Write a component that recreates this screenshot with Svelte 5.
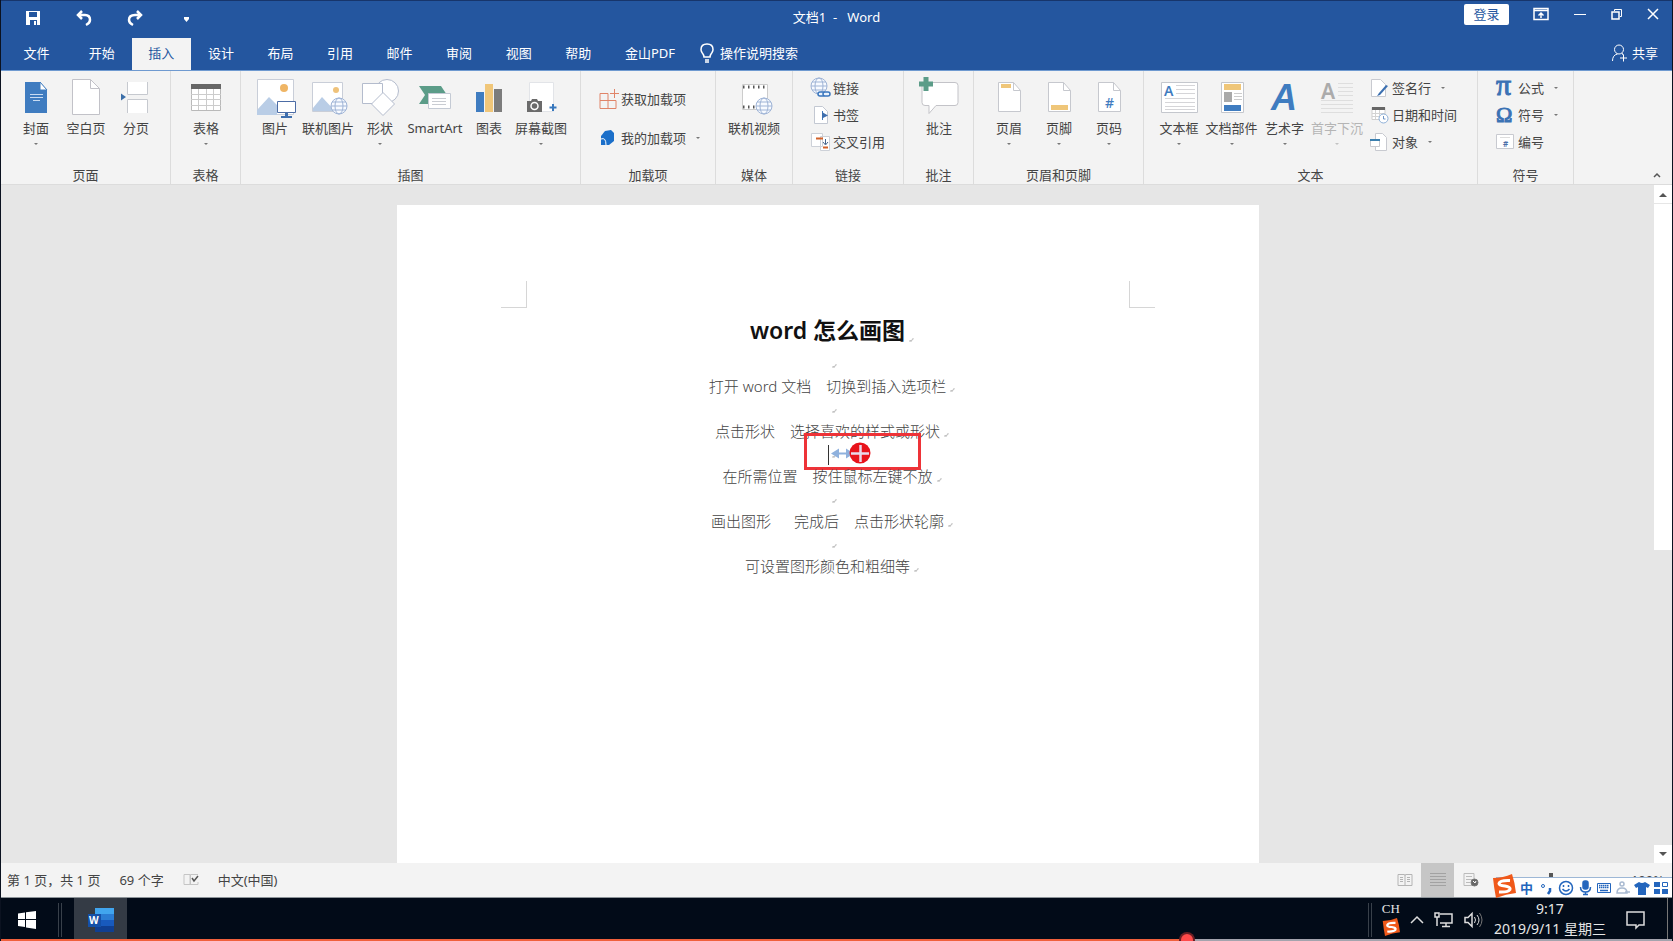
<script>
  const tabs = ['开始', '插入', '设计', '布局', '引用', '邮件', '审阅', '视图', '帮助'];
  let active = $state('插入');

  // big = icon over label, list = stacked small rows
  const groups = [
    { name: '页面', size: 'g-pages', big: [
      { label: '封面', icon: 'cover', menu: true, w: 50 },
      { label: '空白页', icon: 'blank', w: 50 },
      { label: '分页', icon: 'break', w: 50 }
    ] },
    { name: '表格', size: 'g-small', big: [{ label: '表格', icon: 'table', menu: true, w: 50 }] },
    { name: '插图', size: 'g-pics', big: [
      { label: '图片', icon: 'picture', w: 48 },
      { label: '联机图片', icon: 'online', w: 58 },
      { label: '形状', icon: 'shapes', menu: true, w: 46 },
      { label: 'SmartArt', icon: 'smart', w: 64 },
      { label: '图表', icon: 'chart', w: 44 },
      { label: '屏幕截图', icon: 'shot', menu: true, w: 60 }
    ] },
    { name: '加载项', size: 'g-addins', list: [
      { label: '获取加载项', icon: 'store' },
      { label: '我的加载项', icon: 'addin', menu: true }
    ] },
    { name: '媒体', size: 'g-media', big: [{ label: '联机视频', icon: 'video', w: 60 }] },
    { name: '链接', size: 'g-links', list: [
      { label: '链接', icon: 'link' },
      { label: '书签', icon: 'bookmark' },
      { label: '交叉引用', icon: 'cross' }
    ] },
    { name: '批注', size: 'g-small', big: [{ label: '批注', icon: 'comment', w: 50 }] },
    { name: '页眉和页脚', size: 'g-pages', big: [
      { label: '页眉', icon: 'header', menu: true, w: 50 },
      { label: '页脚', icon: 'footer', menu: true, w: 50 },
      { label: '页码', icon: 'number', menu: true, w: 50 }
    ] },
    { name: '文本', size: 'g-text', big: [
      { label: '文本框', icon: 'textbox', menu: true, w: 50 },
      { label: '文档部件', icon: 'parts', menu: true, w: 55 },
      { label: '艺术字', icon: 'wordart', menu: true, w: 51 },
      { label: '首字下沉', icon: 'dropcap', menu: true, w: 54, off: true }
    ], list: [
      { label: '签名行', icon: 'sign', menu: true },
      { label: '日期和时间', icon: 'date' },
      { label: '对象', icon: 'object', menu: true }
    ] },
    { name: '符号', size: 'g-symbols', list: [
      { label: '公式', icon: 'pi', menu: true },
      { label: '符号', icon: 'omega', menu: true },
      { label: '编号', icon: 'hash' }
    ] }
  ];

  const lines = [
    '打开 word 文档\u3000切换到插入选项栏',
    '点击形状\u3000选择喜欢的样式或形状',
    '在所需位置\u3000按住鼠标左键不放',
    '画出图形\u3000  完成后\u3000点击形状轮廓',
    '可设置图形颜色和粗细等'
  ];

  const ime = ['punct', 'smile', 'mic', 'keyboard', 'user', 'shirt', 'grid'];
</script>

{#snippet globe(cx, cy, r)}
  <g fill="#f7faff" stroke="#9fb4d6">
    <circle {cx} {cy} {r} />
    <ellipse {cx} {cy} rx={r / 2} ry={r} fill="none" />
    <path d="M{cx - r} {cy}h{r * 2}M{cx - r + 1} {cy - r / 2}h{r * 2 - 2}M{cx - r + 1} {cy + r / 2}h{r * 2 - 2}" fill="none" />
  </g>
{/snippet}

{#snippet bigIcon(name)}
  <svg class="big-icon" viewBox="0 0 40 40" aria-hidden="true">
    {#if name === 'cover'}
      <path d="M9 3h15l7 8v23H9z" fill="#3f7cc0" />
      <path d="M24 3v8h7z" fill="#fff" stroke="#3f7cc0" />
      <path d="M14 15.500h13M14 18.500h13M17 21.500h7" stroke="#c9dcf2" />
    {:else if name === 'blank'}
      <path d="M6.500.5h18l9 9v26h-27z" fill="#fff" stroke="#c2c2c8" />
      <path d="M24.500.5v9h9" fill="none" stroke="#c2c2c8" />
    {:else if name === 'break'}
      <path d="M11 3h21v13H11zM11 20h21v14H11z" fill="#fff" />
      <path d="M11.500 3v12.500h20V3M11.500 34V20.500h20V34" fill="none" stroke="#c6c9cf" />
      <path d="M5 14.500l5 3.500-5 3.500z" fill="#3b6ea8" />
    {:else if name === 'table'}
      <path d="M5.500 5.500h29v26h-29z" fill="#fff" stroke="#b9b9b9" />
      <path d="M5 5h30v5H5z" fill="#666" />
      <path d="M5 15.500h30M5 20.500h30M5 26.500h30M12.500 10v21M20.500 10v21M27.500 10v21" stroke="#ccc" />
    {:else if name === 'picture'}
      <path d="M2.500.5h36v35h-36z" fill="#fff" stroke="#c9ced8" />
      <path d="M2 36v-5l12-13 8 8v10z" fill="#b9cde6" />
      <circle cx="29" cy="9" r="4" fill="#efb565" />
      <path d="M22.500 22.500h18v11h-18z" fill="#fff" stroke="#4c6ca5" />
      <path d="M30 34h3v3h4v2H26v-2h4z" fill="#3f6fae" />
    {:else if name === 'online'}
      <path d="M4.500 3.500h30v29h-30z" fill="#fff" stroke="#c9ced8" />
      <path d="M5 32v-3l9-11 13 14z" fill="#b9cde6" />
      <circle cx="28" cy="11" r="3" fill="#efc27a" />
      {@render globe(31, 27, 8)}
    {:else if name === 'shapes'}
      <g fill="#fff" stroke="#b4bccd">
        <circle cx="27" cy="12" r="11.500" />
        <path d="M2.500 4.500h20v20h-20z" />
        <path d="M23 13.500L34.500 25 23 36.500 11.500 25z" />
      </g>
    {:else if name === 'smart'}
      <path d="M4 7h22l6 9-6 9H4l6-9z" fill="#5b9c88" />
      <path d="M13.500 14.500h22v15h-22z" fill="#fff" stroke="#c4cad4" />
      <path d="M17 19.500h14M17 22.500h14M17 25.500h14" stroke="#c9ccd2" />
    {:else if name === 'chart'}
      <path d="M7 13h8v20H7z" fill="#3f7cc0" />
      <path d="M16 5h8v28h-8z" fill="#f0c679" />
      <path d="M25 10h8v23h-8z" fill="#7c7c7c" />
    {:else if name === 'shot'}
      <path d="M8.500 3.500h24v29h-24z" fill="#fff" stroke="#e2e4e8" />
      <path d="M6 22h4l1-2h5l1 2h4v11H6z" fill="#6b6b6b" />
      <circle cx="13.500" cy="27" r="3.500" fill="none" stroke="#fff" stroke-width="1.500" />
      <path d="M28.500 28.500h7M32 25v7" stroke="#3878bd" stroke-width="2" />
    {:else if name === 'video'}
      <path d="M8.500 5.500h25v25h-25z" fill="#fff" stroke="#ccc" />
      <path d="M9 8h25M9 28h25" stroke="#555" stroke-width="3" stroke-dasharray="1.500 3.500" />
      {@render globe(30, 27, 8)}
    {:else if name === 'comment'}
      <path d="M6 3.500h30q3 0 3 3v17q0 3-3 3H17l-7 8v-8H6q-3 0-3-3v-17q0-3 3-3z" fill="#fff" stroke="#c3c3c8" />
      <path d="M0 5h14M7-2v14" stroke="#5b9c88" stroke-width="5" />
    {:else if name === 'header' || name === 'footer' || name === 'number'}
      <path d="M9.500 3.500h15l7 8v21h-22z" fill="#fff" stroke="#c6c8ce" />
      <path d="M24.500 3.500v8h7" fill="none" stroke="#c6c8ce" />
      {#if name === 'header'}<path d="M12 5h10v4H12z" fill="#efc679" />{/if}
      {#if name === 'footer'}<path d="M12 26h17v5H12z" fill="#efc679" />{/if}
      {#if name === 'number'}<text x="16" y="29" font-size="14" font-weight="500" fill="#3f7cc0">#</text>{/if}
    {:else if name === 'textbox'}
      <path d="M2.500 3.500h36v30h-36z" fill="#fff" stroke="#c4c7cd" />
      <path d="M17 6.500h19M17 10.500h19M17 14.500h19M6 19.500h30M6 23.500h30M6 27.500h30M6 30.500h30" stroke="#d5d5d8" />
      <text x="5" y="17" font-size="14" font-weight="600" fill="#3f7cc0">A</text>
    {:else if name === 'parts'}
      <path d="M9.500 3.500h22v30h-22z" fill="#fff" stroke="#c4c7cd" />
      <path d="M12 5h17v6H12z" fill="#efc679" />
      <path d="M12 13h8v10h-8z" fill="#a9a9a9" />
      <path d="M22 14.500h8M22 17.500h8M22 20.500h8" stroke="#ccc" />
      <path d="M12 26h17v6H12z" fill="#3f7cc0" />
    {:else if name === 'wordart'}
      <text class="sans" x="6" y="31" font-size="36" font-weight="700" font-style="italic" fill="#3f7cc0">A</text>
    {:else if name === 'dropcap'}
      <path d="M21 4.500h15M21 8.500h15M21 12.500h15M21 16.500h15M4 21.500h32M4 25.500h32M4 29.500h32M4 33.500h32" stroke="#dedede" />
      <text x="4" y="20" font-size="21" font-weight="600" fill="#ababab">A</text>
    {/if}
  </svg>
{/snippet}

{#snippet smallIcon(name)}
  <svg class="small-icon" viewBox="0 0 18 18" aria-hidden="true">
    {#if name === 'store'}
      <path d="M1 3.500h8v15H1zM1 10.500h16v8H9" fill="none" stroke="#e08468" />
      <path d="M15.500-1v9M11 3.500h9" stroke="#e08468" />
    {:else if name === 'addin'}
      <path d="M6 2l6-1 3 3v8l-5 4H2V7z" fill="#1b6fc9" />
      <path d="M2 10q5-2 5 6" fill="none" stroke="#fff" />
    {:else if name === 'link'}
      <g transform="translate(-1 -2)">{@render globe(9, 9, 8)}</g>
      <g fill="#eaf2fc" stroke="#3a76bd" stroke-width="1.500">
        <rect x="7" y="13" width="7" height="4" rx="2" />
        <rect x="12" y="13" width="7" height="4" rx="2" />
      </g>
    {:else if name === 'bookmark'}
      <path d="M3.500.5h8l5 5v12h-13z" fill="#fff" stroke="#c3c8d2" />
      <path d="M11.500 5v9" stroke="#3f7cc0" />
      <path d="M11 6l6 3.500-6 3z" fill="#3f6fae" />
    {:else if name === 'cross'}
      <path d="M.5.5h11v13H.5zM9.500 3.500h9v14h-9z" fill="#fff" stroke="#cdd1d8" />
      <path d="M5 5.500h7M12 14.500h5" stroke="#d2622a" stroke-width="2" />
      <path d="M14.500 6v5M12 9l2.500 3L17 9" fill="none" stroke="#44648c" />
    {:else if name === 'sign'}
      <path d="M1.500.5h9l5 5v12h-14z" fill="#fff" stroke="#c8cad0" />
      <path d="M16 6l-7 8-2 3 3-1 8-9z" fill="#3b6fb0" />
    {:else if name === 'date'}
      <path d="M2 1.500h13v12H2z" fill="#fff" stroke="#cfcfcf" />
      <path d="M2 1h13v3H2z" fill="#666" />
      <path d="M2 7.500h13M2 10.500h13M5.500 4v9M9.500 4v9" stroke="#d3d3d3" />
      <circle cx="13.500" cy="12.500" r="4.500" fill="#fff" stroke="#8eb0d8" />
      <path d="M13.500 10v3h2" fill="none" stroke="#6b93c4" />
    {:else if name === 'object'}
      <path d="M5.500.5h7l4 4v13h-11z" fill="#fff" stroke="#c8cad0" />
      <path d="M.5 6.500h9v7h-9z" fill="#fff" stroke="#c8cad0" />
      <path d="M0 6h10v2H0z" fill="#3b7fae" />
    {:else if name === 'pi'}
      <text class="serif" x="0" y="16" font-size="30" fill="#3b72b4" stroke="#3b72b4">π</text>
    {:else if name === 'omega'}
      <text class="serif" x="0" y="16" font-size="22" fill="#3b72b4" stroke="#3b72b4">Ω</text>
    {:else if name === 'hash'}
      <path d="M.5 1.500h17v14H.5z" fill="#fff" stroke="#c8cad0" />
      <path d="M4 4.500h10" stroke="#ddd" />
      <text x="7" y="14" font-size="8" font-weight="600" fill="#4a6ea8">#</text>
    {/if}
  </svg>
{/snippet}

{#snippet sogou()}
  <svg class="sogou" viewBox="0 0 24 24" aria-hidden="true">
    <path d="M1 4Q11 4 20 0q3 9 4 19Q14 20 4 24 2 14 1 4z" fill="#f0591a" />
    <path d="M18 6.500Q8 6 7 9.500q0 2 6 2.500 6 1 5 3.500-2 3-11 2.500" fill="none" stroke="#fff" stroke-width="3" />
  </svg>
{/snippet}

{#snippet mark()}
  <svg class="mark" viewBox="0 0 4 4" aria-hidden="true"><path d="M4 0v1.500L1 3M0 3h3" fill="none" stroke="#bbb" /></svg>
{/snippet}

<div class="window">
  <header class="titlebar">
    <div class="quick">
      <button aria-label="保存">
        <svg width="16" height="16" viewBox="0 0 16 16"><path d="M1 1h14v14H1z" fill="#fff" /><path d="M4 2h8v5H4zM5 10h7v5H5z" fill="#24569f" /><path d="M9 11h2v4H9z" fill="#fff" /></svg>
      </button>
      <button aria-label="撤消">
        <svg width="16" height="16" viewBox="0 0 16 16" fill="none" stroke="#fff" stroke-width="2.500"><path d="M6 1L2 5l4 4M2 5h7q5 0 5 5 0 3-4 5" /></svg>
      </button>
      <button aria-label="恢复">
        <svg width="16" height="16" viewBox="0 0 16 16" fill="none" stroke="#fff" stroke-width="2.500"><path d="M10 1l4 4-4 4M14 5H8Q2 5 2 10q0 3 4 5" /></svg>
      </button>
      <button aria-label="自定义快速访问工具栏">
        <svg width="16" height="16" viewBox="0 0 16 16"><path d="M6 7h5v2l-2.500 3L6 9z" fill="#fff" /></svg>
      </button>
    </div>
    <h1>文档1&nbsp; -&nbsp;&nbsp; Word</h1>
    <div class="controls">
      <button class="login">登录</button>
      <button aria-label="功能区显示选项">
        <svg width="16" height="14" viewBox="0 0 16 14" fill="none" stroke="#fff"><path d="M1 1.500h14v11H1zM1 3.500h14" stroke-width="1.500" /><path d="M8 11V6M5.500 8.500L8 6l2.500 2.500" stroke-width="1.500" /></svg>
      </button>
      <button aria-label="最小化">
        <svg width="14" height="14" viewBox="0 0 14 14"><path d="M1 7.500h12" stroke="#fff" /></svg>
      </button>
      <button aria-label="还原">
        <svg width="12" height="12" viewBox="0 0 12 12" fill="none" stroke="#fff"><path d="M1 4h7v7H1z" stroke-width="1.500" /><path d="M3.500 3V1.500h7v7H9" /></svg>
      </button>
      <button aria-label="关闭">
        <svg width="12" height="12" viewBox="0 0 12 12"><path d="M1 1l10 10M11 1L1 11" stroke="#fff" stroke-width="1.500" /></svg>
      </button>
    </div>
  </header>

  <nav class="tabs">
    <button class="file">文件</button>
    <div class="tab-row">
      {#each tabs as tab}
        <button class:active={tab === active} onclick={() => (active = tab)}>{tab}</button>
      {/each}
    </div>
    <button class="pdf">金山PDF</button>
    <button class="tell">
      <svg width="14" height="20" viewBox="0 0 14 20" fill="none" stroke="#fff" stroke-width="1.500"><path d="M4 14q0-2-2-4.500Q1 8 1 6.500 1 1 7 1t6 5.500q0 1.500-1 3-2 2.500-2 4.500zM5 17h4M5 19h4" /></svg>
      操作说明搜索
    </button>
    <button class="share">
      <svg width="16" height="18" viewBox="0 0 16 18" fill="none" stroke="#fff"><circle cx="7" cy="5.500" r="4.500" /><path d="M.5 17q0-6 5-7M10 9l1 2M8 14h7M11.500 10.500v7" /></svg>
      共享
    </button>
  </nav>

  <section class="ribbon">
    {#each groups as group}
      <div class="group {group.size}">
        <div class="tools">
          {#if group.big}
            {#each group.big as tool}
              <button class="big" class:off={tool.off} disabled={tool.off} style="width: {tool.w}px">
                {@render bigIcon(tool.icon)}
                <span>{tool.label}</span>
                {#if tool.menu}<i class="arrow"></i>{/if}
              </button>
            {/each}
          {/if}
          {#if group.list}
            <div class="list">
              {#each group.list as tool}
                <button class="row">
                  {@render smallIcon(tool.icon)}
                  <span>{tool.label}</span>
                  {#if tool.menu}<i class="arrow"></i>{/if}
                </button>
              {/each}
            </div>
          {/if}
        </div>
        <div class="group-name">{group.name}</div>
      </div>
    {/each}
    <button class="collapse" aria-label="折叠功能区">
      <svg width="8" height="6" viewBox="0 0 8 6"><path d="M1 5l3-3 3 3" fill="none" stroke="#555" stroke-width="1.500" /></svg>
    </button>
  </section>

  <main class="workspace">
    <div class="canvas">
      <article class="page">
        <div class="corners"><i class="corner"></i><i class="corner right"></i></div>
        <h2><span>word 怎么画图{@render mark()}</span></h2>
        {#each lines as line, i}
          <p class="empty">
            <span>{@render mark()}
              {#if i === 2}
                <svg class="callout" width="117" height="37" viewBox="0 0 117 37" aria-hidden="true">
                  <path d="M24.500 12v20" stroke="#333" />
                  <path d="M27 20.500l8-5v4h7v-4l8 5-8 5v-4h-7v4z" fill="#8fb1dd" />
                  <circle cx="56" cy="20" r="10.500" fill="#e8131b" />
                  <path d="M47 20.500h18M56.500 12v17" stroke="#e9d9ea" stroke-width="2.500" />
                  <path d="M1.500 1.500h114v34H1.500z" fill="none" stroke="#ee3338" stroke-width="3" />
                </svg>
              {/if}
            </span>
          </p>
          <p><span>{line}{@render mark()}</span></p>
        {/each}
      </article>
    </div>
    <div class="scroll">
      <button aria-label="向上滚动"><svg width="8" height="5" viewBox="0 0 8 5"><path d="M0 5l4-4 4 4z" fill="#555" /></svg></button>
      <div class="track"><div class="thumb"></div></div>
      <button aria-label="向下滚动"><svg width="8" height="5" viewBox="0 0 8 5"><path d="M0 0l4 4 4-4z" fill="#555" /></svg></button>
    </div>
  </main>

  <footer class="status">
    <span>第 1 页，共 1 页</span>
    <span>69 个字</span>
    <svg width="16" height="14" viewBox="0 0 16 14" fill="none" stroke="#c5c5c5" aria-hidden="true"><path d="M1 1.500h6v10H1zM7.500 12V1.500H15M7 11.500h8V9" /><path d="M9 5l2 3 4-5" stroke="#555" stroke-width="1.500" /></svg>
    <span>中文(中国)</span>
    <div class="views">
      <button aria-label="阅读视图"><svg width="16" height="14" viewBox="0 0 16 14" fill="none" stroke="#b4b4b4"><path d="M1 1.500h6.500l.5 1 .5-1H15v11H1zM8 2v11M3 4.500h3M3 6.500h3M3 8.500h3M10 4.500h3M10 6.500h3M10 8.500h3" /></svg></button>
      <button class="on" aria-label="页面视图"><svg width="16" height="14" viewBox="0 0 16 14" stroke="#a2a2a2"><path d="M0 .5h16M0 3.500h16M0 6.500h16M0 9.500h16M0 12.500h16" /></svg></button>
      <button aria-label="Web 版式视图"><svg width="16" height="14" viewBox="0 0 16 14" fill="none" stroke="#bbb"><path d="M1 .5h10v12H1zM3 3.500h6M3 6.500h6M3 9.500h4" /><circle cx="11.500" cy="9.500" r="3.500" fill="#666" stroke="#777" /><path d="M10 8l2 2 1-2" stroke="#fff" /></svg></button>
    </div>
    <div class="zoom">
      <i></i><span>+</span><span>100%</span>
    </div>
    <div class="ime">
      {@render sogou()}
      <b>中</b>
      {#each ime as item}
        <svg width="16" height="16" viewBox="0 0 16 16" fill="none" stroke="#2466bd" stroke-width="1.500" aria-hidden="true">
          {#if item === 'punct'}
            <circle cx="4" cy="6" r="1.500" stroke-width="1" /><path d="M11 8v3l-2 3" stroke-width="2.500" />
          {:else if item === 'smile'}
            <circle cx="8" cy="8" r="6.500" /><path d="M4.500 9q3.500 4 7 0M5.500 5v2M10.500 5v2" />
          {:else if item === 'mic'}
            <rect x="6" y="1" width="5" height="8" rx="2" fill="#2466bd" /><path d="M3.500 7q0 5 5 5t5-5M8.500 12v3M6 14.500h5" />
          {:else if item === 'keyboard'}
            <path d="M1.500 3.500h13v9h-13z" stroke-width="1" /><path d="M3 5.500h10M3 7.500h10" stroke-dasharray="1.500 .5" /><path d="M4 10.500h8" />
          {:else if item === 'user'}
            <g stroke="#a9bad1"><circle cx="7" cy="4" r="2" /><path d="M2 13q0-5 5-5t5 5zM10 12h5" /></g>
          {:else if item === 'shirt'}
            <path d="M5 2q3 2 6 0l5 3-2 3-2-1v8H4V7L2 8 0 5z" fill="#2466bd" stroke="none" />
          {:else}
            <path d="M1 2h6v5H1zM1 9h6v5H1zM9 9h6v5H9z" fill="#2466bd" stroke="none" /><path d="M9.500 2.500h5v4h-5z" stroke-width="1" />
          {/if}
        </svg>
      {/each}
    </div>
  </footer>

  <div class="taskbar">
    <button class="start" aria-label="开始">
      <svg width="20" height="20" viewBox="0 0 20 20"><path d="M1 3.500l7-1V9H1zM9 2.300L19 1v8H9zM1 10h7v7l-7-1zM9 10h10v9L9 17.500z" fill="#fff" /></svg>
    </button>
    <i class="grip"></i>
    <button class="word" aria-label="Word">
      <svg width="26" height="24" viewBox="0 0 26 24">
        <path d="M7 0h19v6H7z" fill="#41a5ee" /><path d="M7 6h19v6H7z" fill="#2b7cd3" /><path d="M7 12h19v6H7z" fill="#185abd" /><path d="M7 18h19v6H7z" fill="#103f91" />
        <path d="M0 6h13v13H0z" fill="#1450a8" />
        <text x="1" y="16" font-size="10" font-weight="700" fill="#fff">W</text>
      </svg>
    </button>
    <div class="tray">
      <i class="grip"></i>
      <div class="lang"><span>CH</span>{@render sogou()}</div>
      <svg width="14" height="9" viewBox="0 0 14 9" fill="none" stroke="#ddd" stroke-width="1.500"><path d="M1 8l6-6 6 6" /></svg>
      <svg width="20" height="16" viewBox="0 0 20 16" fill="none" stroke="#ddd" stroke-width="1.500"><path d="M6 2h12v9H6M12 11v3M8 14.500h8M1 1h4v4H1zM3 5v9" /></svg>
      <svg width="20" height="16" viewBox="0 0 20 16" fill="none" stroke="#ddd"><path d="M1 5.500h3l4-4v13l-4-4H1z" stroke-width="1.500" /><path d="M10.500 5q2 3 0 6M13 3q4 5 0 10" /><path d="M15.500 1q5 7 0 14" stroke="#777" /></svg>
      <div class="clock"><span>9:17</span><span>2019/9/11 星期三</span></div>
      <svg width="20" height="20" viewBox="0 0 20 20" fill="none" stroke="#ddd" stroke-width="1.500"><path d="M1 2h17v13h-5l-3 3v-3H1z" /></svg>
      <i class="desktop"></i>
    </div>
    <div class="progress"><div class="played"></div></div>
  </div>
</div>

<style>
  :global(body) {
    margin: 0;
  }

  .window {
    min-height: 100vh;
    box-sizing: border-box;
    display: flex;
    flex-direction: column;
    overflow: hidden;
    border: solid #0b1220;
    border-width: 0 1px;
    background: #e6e6e6;
    color: #444;
    font: 13px/18px "Noto Sans", "Noto Sans CJK SC", sans-serif;
  }

  button {
    margin: 0;
    padding: 0;
    border: 0;
    background: none;
    color: inherit;
    font: inherit;
    white-space: nowrap;
  }

  svg {
    display: block;
    flex: none;
    overflow: visible;
  }

  .serif {
    font-family: "Liberation Serif", serif;
  }

  .sans {
    font-family: "Liberation Sans", sans-serif;
  }

  /* title bar */
  .titlebar {
    display: grid;
    grid-template-columns: 1fr auto 1fr;
    height: 38px;
    box-sizing: border-box;
    border-top: 1px solid #17356b;
    background: #24569f;
    color: #fff;
  }

  .quick {
    display: flex;
    align-items: center;
    gap: 35px;
    padding: 0 0 4px 24px;
  }

  h1 {
    margin: 0;
    font-size: 13px;
    font-weight: 400;
    line-height: 32px;
  }

  .controls {
    display: flex;
    justify-content: flex-end;
    align-items: center;
    gap: 24px;
    height: 26px;
    padding-right: 13px;
  }

  .login {
    width: 45px;
    height: 21px;
    border-radius: 2px;
    background: #fff;
    color: #24569f;
  }

  .tabs {
    display: flex;
    height: 32px;
    background: #24569f;
    color: #fff;
  }

  .tabs button {
    padding-bottom: 2px;
  }

  .file {
    width: 71px;
  }

  .tab-row {
    display: grid;
    grid-template-columns: repeat(9, 1fr);
    width: 536px;
  }

  .tab-row .active {
    background: #f3f3f3;
    color: #24569f;
  }

  .pdf {
    margin: 0 17px;
  }

  .tell,
  .share {
    display: flex;
    align-items: center;
    gap: 6px;
    margin-left: 8px;
  }

  .share {
    gap: 4px;
    margin: 0 14px 0 auto;
  }

  /* ribbon */
  .ribbon {
    display: flex;
    height: 115px;
    box-sizing: border-box;
    border-top: 1px solid #6f9ad0;
    border-bottom: 1px solid #dcdcdc;
    background: #f3f3f3;
  }

  .group {
    display: flex;
    flex-direction: column;
    flex: none;
    box-sizing: border-box;
    border-right: 1px solid #dcdcdc;
  }

  .g-pages { width: 170px; }
  .g-small { width: 70px; }
  .g-pics { width: 340px; }
  .g-addins { width: 135px; }
  .g-media { width: 77px; }
  .g-links { width: 111px; }
  .g-text { width: 334px; }
  .g-symbols { width: 96px; }

  .tools {
    display: flex;
    flex: 1;
    padding: 0 10px;
  }

  .g-media .tools {
    padding: 0 8px;
  }

  .big {
    display: flex;
    flex-direction: column;
    flex: none;
    align-items: center;
    padding-top: 8px;
  }

  .big .arrow {
    margin-top: 6px;
  }

  .off span {
    color: #b5b5b5;
  }

  .off .arrow {
    opacity: 0.4;
  }

  .big-icon {
    width: 40px;
    height: 40px;
  }

  .small-icon {
    width: 18px;
    height: 18px;
  }

  .list {
    display: flex;
    flex-direction: column;
    padding: 3px 0 0 8px;
  }

  .g-addins .list {
    padding-top: 8px;
  }

  .g-text .list {
    padding-left: 6px;
  }

  .row {
    display: flex;
    align-items: center;
    gap: 4px;
    height: 27px;
  }

  .g-addins .row {
    height: 39px;
  }

  .row .arrow {
    margin-left: 6px;
  }

  .arrow {
    border: 2px solid transparent;
    border-top-color: #777;
    border-bottom: 0;
  }

  .group-name {
    height: 18px;
    text-align: center;
  }

  .collapse {
    align-self: flex-end;
    margin-left: auto;
    padding: 6px 11px;
  }

  /* document */
  .workspace {
    display: flex;
    flex: 1;
  }

  .canvas {
    display: flex;
    flex: 1;
    justify-content: center;
    padding-top: 20px;
  }

  .page {
    width: 862px;
    background: #fff;
    text-align: center;
  }

  .corners {
    display: flex;
    justify-content: space-between;
    padding: 76px 104px 0;
  }

  .corner {
    width: 25px;
    height: 26px;
    border: solid #d6d6d6;
    border-width: 0 1px 1px 0;
  }

  .corner.right {
    border-width: 0 0 1px 1px;
  }

  h2 {
    margin: 0;
    color: #111;
    font-size: 23px;
    font-weight: 600;
    line-height: 45px;
  }

  p {
    height: 23px;
    margin: 0;
    color: #444;
    font-size: 15px;
    font-weight: 300;
    line-height: 23px;
    white-space: pre-wrap;
  }

  p.empty {
    height: 22px;
    line-height: 22px;
    white-space: normal;
  }

  h2 span,
  p span {
    position: relative;
  }

  .mark {
    position: absolute;
    right: -8px;
    bottom: 4px;
    width: 4px;
    height: 4px;
  }

  .empty .mark {
    bottom: -15px;
  }

  .callout {
    position: absolute;
    left: -24px;
    top: -10px;
  }

  .scroll {
    display: flex;
    flex-direction: column;
    width: 18px;
  }

  .scroll button {
    display: flex;
    align-items: center;
    justify-content: center;
    height: 18px;
    background: #fff;
  }

  .track {
    flex: 1;
    padding: 1px 0;
  }

  .thumb {
    height: 54%;
    background: #fff;
  }

  /* status bar */
  .status {
    position: relative;
    display: flex;
    align-items: center;
    gap: 19px;
    height: 35px;
    box-sizing: border-box;
    padding-left: 6px;
    border-bottom: 1px solid #8d9499;
    background: #f3f3f3;
  }

  .views {
    display: flex;
    align-self: stretch;
    margin-left: auto;
  }

  .views button {
    display: flex;
    align-items: center;
    justify-content: center;
    width: 33px;
  }

  .views .on {
    background: #c6c6c6;
  }

  .zoom {
    display: flex;
    gap: 12px;
    width: 158px;
    justify-content: flex-end;
    padding-right: 8px;
  }

  .zoom i {
    width: 4px;
    height: 12px;
    margin: 2px 46px 0 0;
    background: #555;
  }

  .ime {
    position: absolute;
    right: 0;
    bottom: 0;
    display: flex;
    align-items: center;
    gap: 3px;
    height: 19px;
    padding-right: 3px;
    border-top: 1px solid #9db7d6;
    background: #fff;
    color: #2466bd;
  }

  .ime b {
    width: 16px;
    font-weight: 700;
  }

  .sogou {
    width: 24px;
    height: 24px;
  }

  .ime .sogou {
    margin: -4px 1px 0 -4px;
  }

  /* taskbar */
  .taskbar {
    position: relative;
    display: flex;
    height: 43px;
    background: #020b18;
    color: #e6e6e6;
  }

  .start {
    padding: 0 21px 0 16px;
  }

  .grip {
    width: 2px;
    margin: 5px 0 4px;
    border: solid #38404a;
    border-width: 0 1px;
  }

  .word {
    display: flex;
    justify-content: center;
    align-items: center;
    width: 53px;
    margin-left: 12px;
    background: #343b45;
  }

  .tray {
    display: flex;
    align-items: center;
    gap: 10px;
    margin-left: auto;
  }

  .tray .grip {
    align-self: stretch;
  }

  .lang {
    display: flex;
    flex-direction: column;
    align-items: center;
    width: 18px;
    padding-bottom: 3px;
    font-family: "Liberation Serif", serif;
  }

  .lang .sogou {
    width: 18px;
    height: 18px;
  }

  .clock {
    display: flex;
    flex-direction: column;
    align-items: center;
    padding: 0 10px 2px 0;
    font-size: 14px;
    line-height: 20px;
  }

  .desktop {
    width: 4px;
    align-self: stretch;
    margin-left: 11px;
    border-left: 1px solid #777;
  }

  .progress {
    position: absolute;
    inset: auto 0 0;
    height: 2px;
    background: #a3a3ad;
  }

  .played {
    position: relative;
    width: 71%;
    height: 100%;
    background: #f0603c;
  }

  .played::after {
    content: "";
    position: absolute;
    right: -6px;
    top: -5px;
    width: 12px;
    height: 12px;
    border-radius: 50%;
    background: #ff4a4a;
    box-shadow: 0 0 0 2px #6b1f24;
  }
</style>
